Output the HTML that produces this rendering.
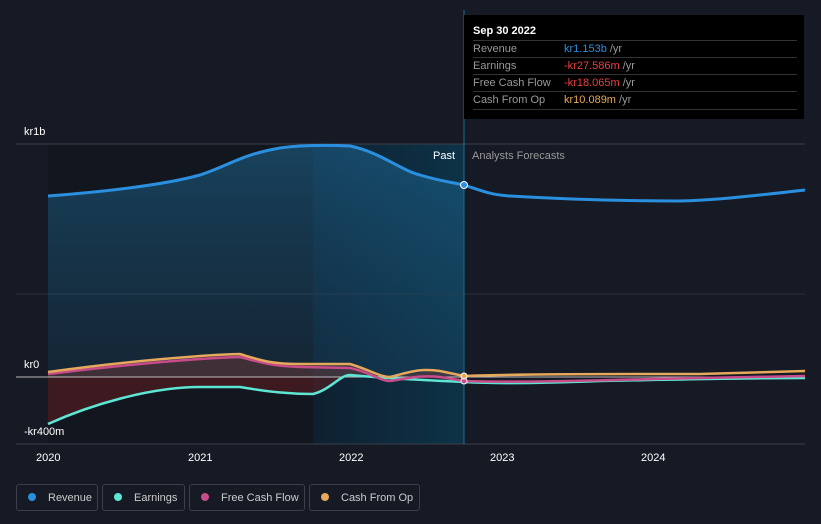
<!DOCTYPE html><html><head><style>
body{margin:0;width:821px;height:524px;background:#151a24;font-family:"Liberation Sans",sans-serif;overflow:hidden;position:relative}
.t{position:absolute;color:#fff;font-size:11px}
.tip{position:absolute;left:464px;top:15px;width:340px;height:104px;background:#000;}
.tip .h{position:absolute;left:9px;top:10px;color:#fff;font-size:11px;font-weight:bold}
.row{position:absolute;left:9px;width:324px;border-top:1px solid #333;height:17px;font-size:11px;line-height:17px;color:#999}
.row span{position:absolute;left:91px}
.leg{position:absolute;top:484px;height:27px;border:1px solid #3a3f4a;border-radius:3px;color:#ccc;font-size:11px;line-height:27px;box-sizing:border-box}
.leg i{display:inline-block;width:8px;height:8px;border-radius:50%;margin:0 12px 0 11px;vertical-align:-0px}
</style></head><body>
<svg width="821" height="524" style="position:absolute;left:0;top:0">
<defs><linearGradient id="bl" x1="0" x2="1"><stop offset="0" stop-color="#0e2030"/><stop offset="1" stop-color="#0d3348"/></linearGradient>
<linearGradient id="rv" x1="0" y1="0" x2="0" y2="1"><stop offset="0" stop-color="#1d6a96" stop-opacity=".7"/><stop offset="1" stop-color="#1a4a6a" stop-opacity=".4"/></linearGradient></defs>
<rect x="48" y="144" width="265" height="300" fill="#12161e"/>
<rect x="313" y="144" width="151" height="300" fill="url(#bl)"/>
<line x1="16" y1="144" x2="805" y2="144" stroke="#3a3f4a"/>
<line x1="16" y1="294" x2="805" y2="294" stroke="#2a2f3a"/>
<line x1="16" y1="444" x2="805" y2="444" stroke="#3a3f4a"/>
<line x1="464" y1="10" x2="464" y2="444" stroke="#1f6f99"/>
<path d="M48,196 C100,192 160,186 200,175 C230,165 240,155 280,148 C300,145 330,145 350,146 C380,152 400,170 420,175 C440,181 450,182 464,185 L464,377 L48,377Z" fill="url(#rv)" opacity=".75"/>
<path d="M48,377 L48,424 C90,405 150,387 200,387 L240,387 C270,392 290,394 313,394 C330,390 340,375 350,375 L464,380 L464,377Z" fill="#5a1e22" opacity=".6"/>
<path d="M48,371 L240,354 L270,365 L350,365 L390,377 L430,371 L464,376 L464,377 L48,377Z" fill="#6a3a3a" opacity=".5"/>
<line x1="16" y1="377" x2="805" y2="377" stroke="#bbb"/>
<path d="M48,196 C100,192 160,186 200,175 C230,165 240,155 280,148 C300,145 330,145 350,146 C380,152 400,170 420,175 C440,181 450,182 464,185 C480,190 490,195 510,196 C560,199 620,201 680,201 C720,200 760,195 805,190" fill="none" stroke="#2b8fe0" stroke-width="3"/>
<path d="M48,424 C90,405 150,387 200,387 L240,387 C270,392 290,394 313,394 C330,390 340,375 350,375 C380,378 420,380 464,382 C500,384 550,383 600,381 C700,379 760,378 805,378" fill="none" stroke="#5ee6d4" stroke-width="2.5"/>
<path d="M48,374 C120,365 200,358 240,357 C260,362 270,366 300,367 L350,368 C370,372 380,381 390,381 C410,378 420,375 440,377 L464,381 C520,383 600,380 700,378 L805,376" fill="none" stroke="#c84c8a" stroke-width="2.5"/>
<path d="M48,372 C120,362 200,355 240,354 C260,360 270,364 300,364 L350,364 C370,370 380,377 390,377 C410,372 420,368 440,371 L464,376 C520,374 600,374 700,374 L805,371" fill="none" stroke="#e6a85a" stroke-width="2.5"/>
<circle cx="464" cy="185" r="3.5" fill="#2b8fe0" stroke="#fff"/>
<circle cx="464" cy="381" r="3" fill="#c84c8a" stroke="#fff"/>
<circle cx="464" cy="376" r="3" fill="#e6a85a" stroke="#fff"/>
</svg>
<div class="t" style="left:24px;top:126px">kr1b</div>
<div class="t" style="left:24px;top:359px">kr0</div>
<div class="t" style="left:24px;top:426px">-kr400m</div>
<div class="t" style="left:433px;top:150px">Past</div>
<div class="t" style="left:472px;top:150px;color:#999">Analysts Forecasts</div>
<div class="t" style="left:36px;top:452px">2020</div>
<div class="t" style="left:188px;top:452px">2021</div>
<div class="t" style="left:339px;top:452px">2022</div>
<div class="t" style="left:490px;top:452px">2023</div>
<div class="t" style="left:641px;top:452px">2024</div>
<div class="tip"><div class="h">Sep 30 2022</div>
<div class="row" style="top:25px">Revenue<span style="color:#2b8fe0">kr1.153b <b style="color:#999;font-weight:normal">/yr</b></span></div>
<div class="row" style="top:42px">Earnings<span style="color:#e84040">-kr27.586m <b style="color:#999;font-weight:normal">/yr</b></span></div>
<div class="row" style="top:59px">Free Cash Flow<span style="color:#e84040">-kr18.065m <b style="color:#999;font-weight:normal">/yr</b></span></div>
<div class="row" style="top:76px;border-bottom:1px solid #333">Cash From Op<span style="color:#e6a85a">kr10.089m <b style="color:#999;font-weight:normal">/yr</b></span></div>
</div>
<div class="leg" style="left:16px;width:82px"><i style="background:#2b8fe0"></i>Revenue</div>
<div class="leg" style="left:102px;width:83px"><i style="background:#5ee6d4"></i>Earnings</div>
<div class="leg" style="left:189px;width:116px"><i style="background:#c84c8a"></i>Free Cash Flow</div>
<div class="leg" style="left:309px;width:111px"><i style="background:#e6a85a"></i>Cash From Op</div>
</body></html>
